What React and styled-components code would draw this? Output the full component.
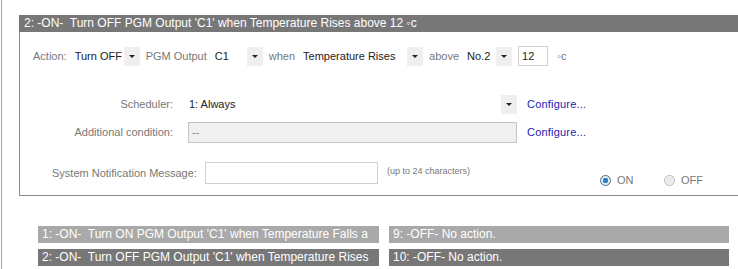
import React from "react";
import styled, { createGlobalStyle } from "styled-components";

const GlobalStyle = createGlobalStyle`
  html, body {
    margin: 0;
    padding: 0;
    background: #fff;
    overflow: hidden;
  }
  body {
    font-family: "Liberation Sans", Arial, sans-serif;
  }
`;

const Page = styled.div`
  margin-left: 1px;
  border-left: 1px solid #a4a4a4;
  height: 269px;
  padding-left: 17px;
  padding-top: 15px;
  box-sizing: border-box;
  overflow: hidden;
`;

const Panel = styled.div`
  width: 730px;
`;

const Header = styled.div`
  height: 17px;
  line-height: 17px;
  background: #777;
  color: #fff;
  font-size: 12px;
  padding-left: 5px;
  white-space: pre;
`;

const Body = styled.div`
  border: 1px solid #8a8a8a;
  border-top: none;
  padding: 14px 0 12px 13px;
  font-size: 11px;
  color: #777;
`;

const Row = styled.div`
  display: flex;
  align-items: center;
  height: 20px;
  gap: ${(p) => p.$gap ?? 6}px;
  margin-top: ${(p) => p.$top || 0}px;
  padding-left: ${(p) => p.$indent || 0}px;
`;

const Label = styled.span`
  color: #777;
  white-space: nowrap;
  margin-left: ${(p) => p.$ml || 0}px;
`;

const FieldLabel = styled.span`
  width: ${(p) => p.$w}px;
  text-align: right;
  color: #777;
  white-space: nowrap;
  margin-right: ${(p) => p.$mr || 14}px;
`;

const SelectBox = styled.div`
  display: flex;
  align-items: center;
  width: ${(p) => p.$w}px;
  height: 20px;
  color: #222;
  flex-shrink: 0;
`;

const SelectText = styled.span`
  flex: 1;
  padding-left: 2px;
  white-space: nowrap;
`;

const Arrow = styled.span`
  width: 16px;
  height: 19px;
  background: #efefef;
  display: flex;
  align-items: center;
  justify-content: center;
  &::after {
    content: "";
    border-left: 3px solid transparent;
    border-right: 3px solid transparent;
    border-top: 3px solid #222;
  }
`;

const TextInput = styled.div`
  box-sizing: border-box;
  width: ${(p) => p.$w}px;
  height: ${(p) => p.$h || 21}px;
  border: 1px solid ${(p) => (p.$disabled ? "#c4c4c4" : "#cfcfcf")};
  background: ${(p) => (p.$disabled ? "#f0f0f0" : "#fff")};
  color: ${(p) => (p.$disabled ? "#888" : "#222")};
  padding-left: 3px;
  line-height: ${(p) => (p.$h || 21) - 2}px;
  flex-shrink: 0;
`;

const Link = styled.span`
  color: #1d1db0;
  margin-left: 10px;
  letter-spacing: 0.2px;
  white-space: nowrap;
`;

const Hint = styled.span`
  font-size: 9px;
  color: #777;
  margin-left: 9px;
  white-space: nowrap;
  margin-top: -4px;
`;

const Radios = styled.div`
  display: flex;
  align-items: center;
  margin-left: 130px;
  margin-top: 14px;
`;

const RadioItem = styled.label`
  display: flex;
  align-items: center;
  gap: 6px;
  width: 64px;
  color: #777;
`;

const RadioDot = styled.span`
  box-sizing: border-box;
  width: 11px;
  height: 11px;
  border-radius: 50%;
  border: 1px solid ${(p) => (p.$on ? "#4a6b86" : "#b8b8b8")};
  background: ${(p) =>
    p.$on
      ? "radial-gradient(circle, #2f7fc2 0 2.6px, #e4eef6 3px)"
      : "radial-gradient(circle, #e8e8e8 0 3px, #f6f6f6 4px)"};
`;

const List = styled.div`
  display: grid;
  grid-template-columns: 341px 340px;
  column-gap: 10px;
  row-gap: 6px;
  margin: 30px 0 0 19px;
`;

const ListItem = styled.div`
  height: 17px;
  line-height: 17px;
  background: ${(p) => (p.$active ? "#777" : "#a9a9a9")};
  color: #fff;
  font-size: 12px;
  padding-left: 4px;
  white-space: pre;
  overflow: hidden;
`;

const Select = ({ w, children }) => (
  <SelectBox $w={w}>
    <SelectText>{children}</SelectText>
    <Arrow />
  </SelectBox>
);

const Radio = ({ on, children }) => (
  <RadioItem>
    <RadioDot $on={on} />
    {children}
  </RadioItem>
);

const items = [
  ["1: -ON-  Turn ON PGM Output 'C1' when Temperature Falls a", false],
  ["9: -OFF- No action.", false],
  ["2: -ON-  Turn OFF PGM Output 'C1' when Temperature Rises", true],
  ["10: -OFF- No action.", true],
];

export default function App() {
  return (
    <>
      <GlobalStyle />
      <Page>
        <Panel>
          <Header>2: -ON-  Turn OFF PGM Output 'C1' when Temperature Rises above 12 ◦c</Header>
          <Body>
            <Row>
              <Label>Action:</Label>
              <Select w={67}>Turn OFF</Select>
              <Label>PGM Output</Label>
              <Select w={50}>C1</Select>
              <Label>when</Label>
              <Select w={122}>Temperature Rises</Select>
              <Label>above</Label>
              <Select w={47}>No.2</Select>
              <TextInput $w={30} $h={20}>12</TextInput>
              <Label $ml={3}>◦c</Label>
            </Row>

            <Row $top={28} $gap={0}>
              <FieldLabel $w={140}>Scheduler:</FieldLabel>
              <Select w={330}>1: Always</Select>
              <Link>Configure...</Link>
            </Row>

            <Row $top={8} $gap={0}>
              <FieldLabel $w={140} $mr={15}>Additional condition:</FieldLabel>
              <TextInput $w={329} $disabled>--</TextInput>
              <Link>Configure...</Link>
            </Row>

            <Row $top={21} $indent={19} $gap={0}>
              <FieldLabel $w={141} $mr={12}>System Notification Message:</FieldLabel>
              <TextInput $w={173} $h={22} />
              <Hint>(up to 24 characters)</Hint>
              <Radios>
                <Radio on>ON</Radio>
                <Radio>OFF</Radio>
              </Radios>
            </Row>
          </Body>
        </Panel>

        <List>
          {items.map(([text, active]) => (
            <ListItem key={text} $active={active}>
              {text}
            </ListItem>
          ))}
        </List>
      </Page>
    </>
  );
}
